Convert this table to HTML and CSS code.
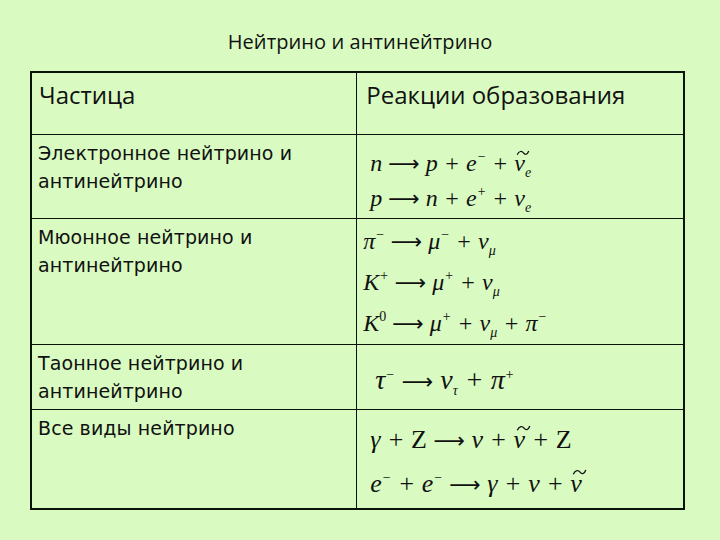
FILE: index.html
```html
<!DOCTYPE html>
<html lang="ru">
<head>
<meta charset="utf-8">
<title>Нейтрино и антинейтрино</title>
<link rel="stylesheet" href="styles.css">
</head>
<body>
<div class="page">
  <h1 class="title">Нейтрино и антинейтрино</h1>
  <table class="grid">
    <colgroup><col class="c1"><col class="c2"></colgroup>
    <tr class="r-head">
      <th class="hcell">Частица</th>
      <th class="hcell hcell-2">Реакции образования</th>
    </tr>
    <tr class="r1">
      <td class="name">Электронное нейтрино и антинейтрино</td>
      <td class="math m1">
        <div class="eq">n <span class="ar">⟶</span> p + e<sup>−</sup> + <span class="tl">ν<svg class="tw" viewBox="0 0 14 6"><path d="M1 5 C3 0.5 6 1 7.5 3 S11.5 5.5 13 1"/></svg></span><sub>e</sub></div>
        <div class="eq">p <span class="ar">⟶</span> n + e<sup>+</sup> + ν<sub>e</sub></div>
      </td>
    </tr>
    <tr class="r2">
      <td class="name">Мюонное нейтрино и антинейтрино</td>
      <td class="math m2">
        <div class="eq">π<sup>−</sup> <span class="ar">⟶</span> μ<sup>−</sup> + ν<sub>μ</sub></div>
        <div class="eq">K<sup>+</sup> <span class="ar">⟶</span> μ<sup>+</sup> + ν<sub>μ</sub></div>
        <div class="eq">K<sup class="up">0</sup> <span class="ar">⟶</span> μ<sup>+</sup> + ν<sub>μ</sub> + π<sup>−</sup></div>
      </td>
    </tr>
    <tr class="r3">
      <td class="name">Таонное нейтрино и антинейтрино</td>
      <td class="math m3">
        <div class="eq big3">τ<sup>−</sup> <span class="ar">⟶</span> ν<sub>τ</sub> + π<sup>+</sup></div>
      </td>
    </tr>
    <tr class="r4">
      <td class="name">Все виды нейтрино</td>
      <td class="math m4">
        <div class="eq big">γ + <span class="up">Z</span> <span class="ar">⟶</span> ν + <span class="tl">ν<svg class="tw" viewBox="0 0 14 6"><path d="M1 5 C3 0.5 6 1 7.5 3 S11.5 5.5 13 1"/></svg></span> + <span class="up">Z</span></div>
        <div class="eq big">e<sup>−</sup> + e<sup>−</sup> <span class="ar">⟶</span> γ + ν + <span class="tl">ν<svg class="tw" viewBox="0 0 14 6"><path d="M1 5 C3 0.5 6 1 7.5 3 S11.5 5.5 13 1"/></svg></span></div>
      </td>
    </tr>
  </table>
</div>
</body>
</html>
```
FILE: styles.css
```css
html, body {
  margin: 0;
  padding: 0;
  background: #d9fbc1;
}
.page {
  width: 720px;
  height: 540px;
  padding-top: 30px;
  box-sizing: border-box;
  color: #000;
}
.title {
  margin: 0 0 17px 0;
  font-family: "Open Sans", "Liberation Sans", sans-serif;
  font-weight: normal;
  font-size: 20px;
  line-height: 24px;
  text-align: center;
  letter-spacing: 0.1px;
  color: #111;
}
.grid {
  margin-left: 30px;
  width: 655px;
  border-collapse: collapse;
  border: 2px solid #0a120a;
}
.c1 { width: 327px; }
.c2 { width: 328px; }
.grid td, .grid th {
  border: 1px solid #0a120a;
  vertical-align: top;
  padding: 0;
}
.r-head { height: 62px; }
.r1 { height: 84px; }
.r2 { height: 124px; }
.r3 { height: 65px; }
.r4 { height: 100px; }
.hcell {
  text-align: left;
  font-family: "Open Sans", "Liberation Sans", sans-serif;
  font-weight: normal;
  font-size: 24px;
  line-height: 30px;
  padding: 7px 0 0 7px !important;
  color: #111;
}
.hcell-2 { padding-left: 9px !important; }
.name {
  font-family: "DejaVu Sans", "Liberation Sans", sans-serif;
  font-size: 19px;
  line-height: 28px;
  letter-spacing: 0.1px;
  padding: 4px 8px 0 6px !important;
  color: #111;
}
.math {
  font-family: "Liberation Serif", "Times New Roman", serif;
  font-style: italic;
  font-size: 24px;
  color: #111;
}
.eq {
  line-height: 35px;
  white-space: nowrap;
}
.eq sup, .eq sub {
  font-size: 14px;
  line-height: 0;
}
.eq sup { vertical-align: 10px; }
.eq sub { vertical-align: -6px; }
.ar {
  font-family: "DejaVu Sans", sans-serif;
  font-style: normal;
  font-size: 22px;
}
.up { font-style: normal; }
.m1 { padding: 11px 0 0 13px !important; }
.m2 { padding: 2px 0 0 6px !important; }
.m2 .eq { line-height: 41px; }
.m3 { padding: 14px 0 0 18px !important; }
.m4 { padding: 8px 0 0 13px !important; }
.big { font-size: 26px; line-height: 43px; }
.big3 { font-size: 28px; line-height: 42px; }
.tl {
  position: relative;
  display: inline-block;
  line-height: 1;
}
.tw {
  position: absolute;
  left: 0.08em;
  top: -0.04em;
  width: 0.58em;
  height: 0.24em;
  fill: none;
  stroke: #111;
  stroke-width: 1.3;
  overflow: visible;
}
```
